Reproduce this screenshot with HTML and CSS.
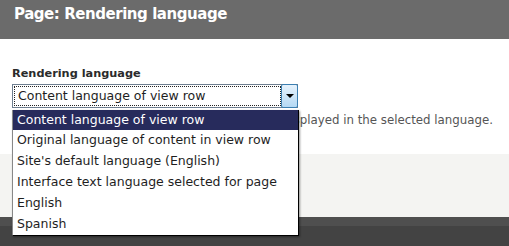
FILE: index.html
```html
<!DOCTYPE html>
<html>
<head>
<meta charset="utf-8">
<link rel="stylesheet" href="styles.css">
</head>
<body>
<div class="page">
  <header class="titlebar"><h1>Page: Rendering language</h1></header>
  <main class="content">
    <div class="field">
      <label class="label">Rendering language</label>
      <div class="select">
        <span class="select-value">Content language of view row</span>
        <span class="select-btn"><span class="tri"></span></span>
      </div>
      <p class="help">All content in this view will be displayed in the selected language.</p>
      <ul class="options">
        <li class="opt active">Content language of view row</li>
        <li class="opt">Original language of content in view row</li>
        <li class="opt">Site's default language (English)</li>
        <li class="opt">Interface text language selected for page</li>
        <li class="opt">English</li>
        <li class="opt">Spanish</li>
      </ul>
    </div>
  </main>
  <div class="actions"></div>
  <div class="footer-top"></div>
  <div class="footer"></div>
</div>
</body>
</html>
```
FILE: styles.css
```css
* { box-sizing: border-box; }
html, body { margin: 0; padding: 0; }
body {
  width: 509px;
  height: 246px;
  overflow: hidden;
  font-family: "DejaVu Sans", Verdana, sans-serif;
  background: #444444;
}
.page { display: flex; flex-direction: column; height: 246px; }
.titlebar {
  height: 39px;
  background: #6b6b6b;
  padding: 5px 0 0 14px;
}
.titlebar h1 {
  margin: 0;
  color: #ffffff;
  font-size: 15px;
  letter-spacing: -0.45px;
  font-weight: bold;
  line-height: 18px;
}
.content {
  background: #ffffff;
  height: 115px;
  padding: 27px 0 0 12px;
}
.field { position: relative; }
.label {
  display: block;
  font-size: 11.3px;
  font-weight: bold;
  color: #2b2b2b;
  line-height: 15px;
  height: 18px;
}
.select {
  width: 286px;
  height: 24px;
  border: 1px solid #6f7f90;
  background: #fff;
  display: flex;
  padding: 1px;
}
.select-value {
  flex: 1;
  border: 1px dotted #222;
  font-size: 12.5px;
  line-height: 18px;
  padding-left: 3px;
  color: #1e1e1e;
}
.select-btn {
  width: 17px;
  margin: -2px -2px -2px 0;
  border: 1px solid #3c7fb1;
  border-radius: 2px;
  background: linear-gradient(#e6f2fc, #b5d9f4);
  display: flex;
  align-items: center;
  justify-content: center;
}
.tri {
  width: 0; height: 0;
  border-left: 4px solid transparent;
  border-right: 4px solid transparent;
  border-top: 4px solid #000;
}
.help {
  margin: 4px 0 0 0;
  width: 481px;
  text-align: right;
  white-space: nowrap;
  overflow: hidden;
  font-size: 11.8px;
  color: #555555;
  line-height: 16px;
}
.options {
  position: absolute;
  left: 0;
  top: 44px;
  width: 287px;
  margin: 0;
  padding: 0;
  list-style: none;
  background: #fff;
  border: 1px solid #000;
  border-left-color: #888;
  border-top: 0;
  box-shadow: 1px 1px 2px rgba(0,0,0,0.4);
}
.opt {
  height: 21px;
  font-size: 12.5px;
  line-height: 20px;
  padding-left: 4px;
  color: #1e1e1e;
}
.opt.active { background: #272b5c; color: #ffffff; height: 20px; }
.actions { height: 63px; background: #f4f4f2; }
.footer-top { height: 9px; background: #4f4f4f; }
.footer { flex: 1; background: #434343; }
```
